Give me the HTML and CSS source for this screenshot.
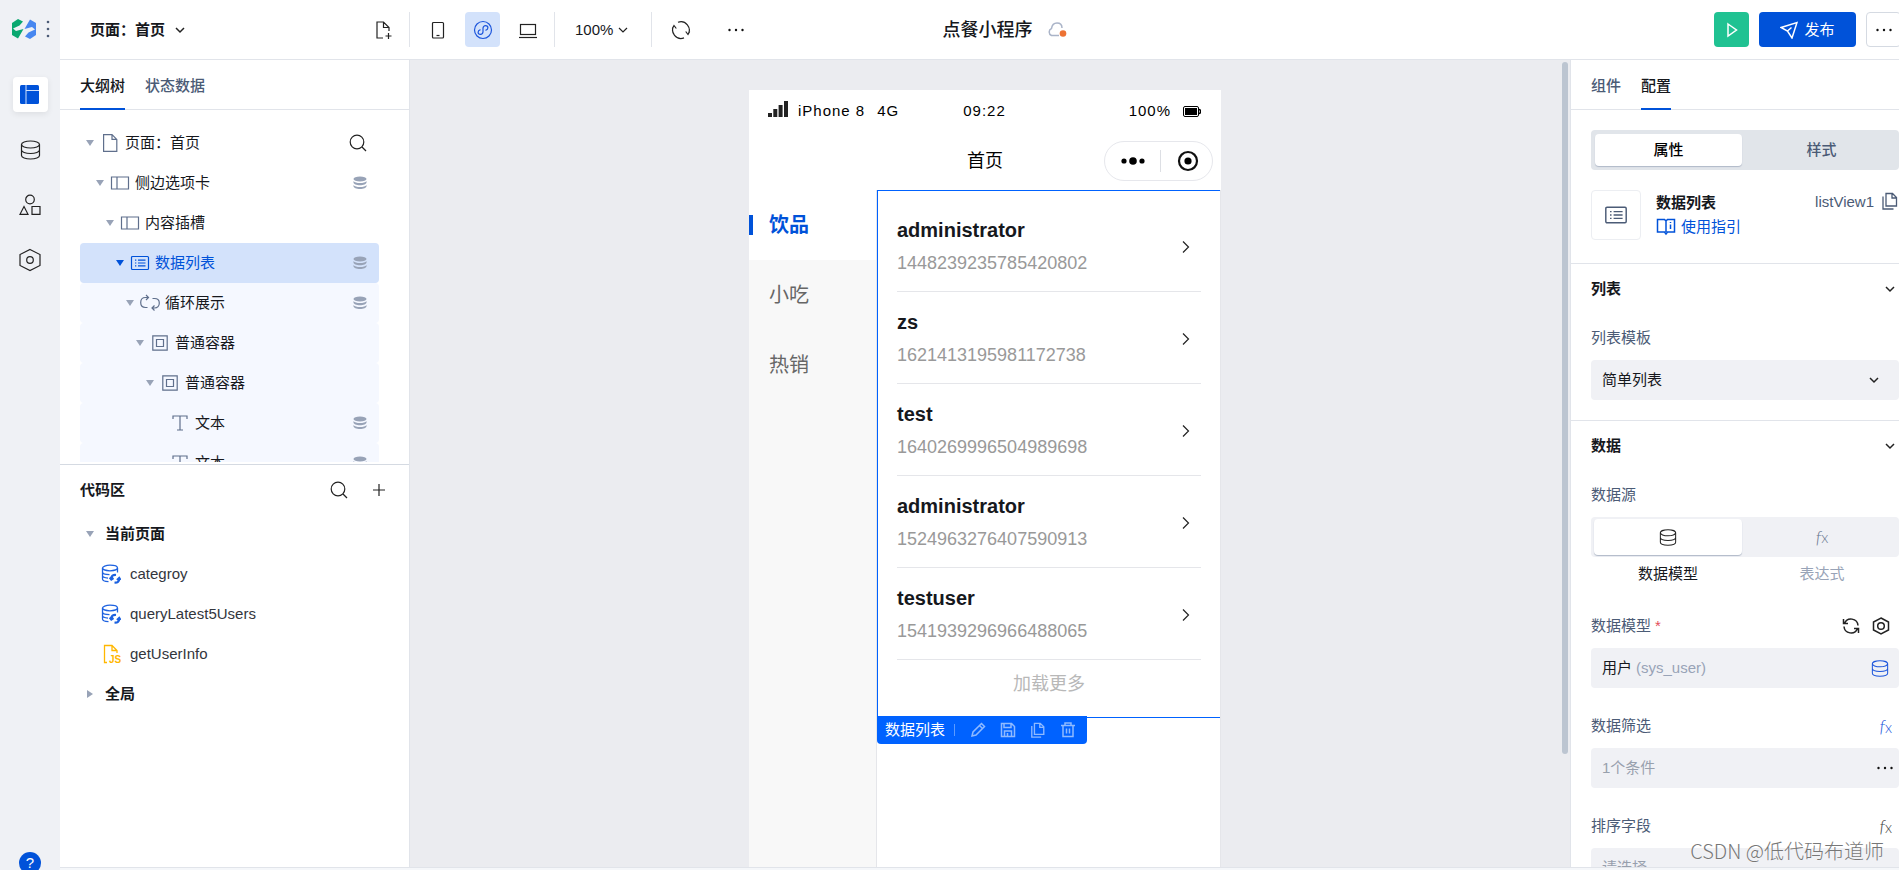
FILE: index.html
```html
<!DOCTYPE html>
<html lang="zh-CN">
<head>
<meta charset="utf-8">
<title>点餐小程序</title>
<link rel="stylesheet" href="styles.css">
</head>
<body>
<svg class="sprite" aria-hidden="true">
  <symbol id="i-chev" viewBox="0 0 12 12"><path d="M2 4l4 4 4-4"/></symbol>
  <symbol id="i-right" viewBox="0 0 16 16"><path d="M5 2.500l5.500 5.500-5.500 5.500"/></symbol>
  <symbol id="i-tri" viewBox="0 0 8 6"><path d="M0 0h8l-4 6z"/></symbol>
  <symbol id="i-db" viewBox="0 0 20 20"><ellipse cx="10" cy="4.500" rx="9" ry="3.500"/><path d="M1 4.500v11c0 2 4 3.500 9 3.500s9-1.500 9-3.500v-11M1 10c0 2 4 3.500 9 3.500s9-1.500 9-3.500"/></symbol>
  <symbol id="i-dbs" viewBox="0 0 14 14"><ellipse cx="7" cy="3" rx="6.500" ry="2.500"/><path d="M.5 5c1 1.500 3.500 2 6.500 2s5.500-.5 6.500-2v1.500c0 1.500-3 2.700-6.500 2.700S.5 8 .5 6.500zM.5 9c1 1.500 3.500 2 6.500 2s5.500-.5 6.500-2v1.300c0 1.500-3 2.700-6.500 2.700S.5 11.800.5 10.300z"/></symbol>
  <symbol id="i-file" viewBox="0 0 20 18"><path d="M3.600 .6h8.400l4.800 4.800v12H3.600zM12 .6v4.800h4.800"/></symbol>
  <symbol id="i-newfile" viewBox="0 0 18 20"><path d="M8 18H2V2h6.500l5.500 5.500V11M8.500 2v5.500H14M10.500 16h6M13.500 13v6"/></symbol>
  <symbol id="i-copy" viewBox="0 0 18 18"><path d="M5 1.500h6.500l4 4V14H5zM11 1.500V6h4.500M2 4.500V17h10.500"/></symbol>
  <symbol id="i-side" viewBox="0 0 20 16"><path d="M1.500 2h17v12h-17zM7 2v12"/></symbol>
  <symbol id="i-list" viewBox="0 0 20 16"><rect x="1.500" y="1.500" width="17" height="13" rx="1"/><path d="M8 5.200h7.500M8 8h7.500M8 10.800h7.500M5 5.200h1.300M5 8h1.300M5 10.800h1.300"/></symbol>
  <symbol id="i-loop" viewBox="0 0 20 16"><path d="M8 2.500H5.500C2.500 2.500 .7 4.500 .7 7.500s1.800 5 4.800 5h2M6 0l2.500 2.500L6 5M12.500 3.500h2c3 0 4.800 1.800 4.800 4.500s-1.800 5-4.800 5H12M14.500 10.500l-2.500 2.500 2.500 2.500"/></symbol>
  <symbol id="i-box" viewBox="0 0 16 16"><path d="M.8 .8h14.400v14.400H.8zM4.500 4.500h7v7h-7z"/></symbol>
  <symbol id="i-text" viewBox="0 0 16 16"><path d="M1 4V1h14v3M8 1v14M5 15h6"/></symbol>
  <symbol id="i-search" viewBox="0 0 18 18"><circle cx="8" cy="8" r="6.800"/><path d="M13 13l4 4"/></symbol>
  <symbol id="i-plus" viewBox="0 0 14 14"><path d="M1 7h12M7 1v12"/></symbol>
  <symbol id="i-dots" viewBox="0 0 18 18"><circle cx="2.500" cy="9" r="1.200"/><circle cx="9" cy="9" r="1.200"/><circle cx="15.500" cy="9" r="1.200"/></symbol>
  <symbol id="i-query" viewBox="0 0 20 20"><ellipse cx="9" cy="4" rx="7.500" ry="2.800"/><path d="M1.500 4v11c0 1.300 2.500 2.500 6 2.700M16.500 4v4.500M1.500 8c0 1.300 2.500 2.600 7 2.700M1.500 11.500c0 1.300 2 2.300 5.500 2.600"/><path d="M15 11c-3-.3-4.700 1-4.700 3.500M8.700 13.500l1.600 2 2.200-1.500M13.500 18.500c3 .3 4.700-1 4.700-3.500M16 16l2.200-2 1.300 2" stroke-width="2.200"/></symbol>
</svg>

<div class="app">
  <nav class="rail" aria-label="主导航">
    <div class="brand">
      <svg class="logo" viewBox="0 0 24 20"><path fill="#0aa870" d="M0 4L6 0l5 2.500-3.500 4L1 9.500l3 2.500 7.500-2L6 19.500 0 16z"/><path fill="#4787f0" d="M24 16l-6 4-5-2.500 3.500-4 6.500-3L20 8l-7.500 2L18 .5 24 4z"/></svg>
      <svg class="vdots" viewBox="0 0 4 18"><circle cx="2" cy="2" r="1.300"/><circle cx="2" cy="9" r="1.300"/><circle cx="2" cy="16" r="1.300"/></svg>
    </div>
    <button class="rail-btn active" aria-label="页面"><svg width="20" height="20" viewBox="0 0 20 20"><rect width="19" height="19" rx="1.500" fill="#0052d9"/><path d="M6 0v19M6 5.500h13" stroke="#d3e2fb" fill="none"/></svg></button>
    <button class="rail-btn" aria-label="数据"><svg class="ic" width="21" height="20"><use href="#i-db"/></svg></button>
    <button class="rail-btn" aria-label="组件"><svg class="ic" width="22" height="22" viewBox="0 0 22 22"><circle cx="11" cy="5.500" r="4.300"/><path d="M5 12.500l4 7.800H1zM13 12.500h8v7.800h-8z"/></svg></button>
    <button class="rail-btn" aria-label="设置"><svg class="ic" width="22" height="24" viewBox="0 0 22 24"><path d="M11 1.500l10 5v11l-10 5-10-5v-11z"/><circle cx="11" cy="12" r="3.300"/></svg></button>
    <button class="help" aria-label="帮助">?</button>
  </nav>

  <header class="topbar">
    <div class="tools">
      <div class="page-part">
        <button class="page-pick">页面：首页<svg class="ic mid" width="12" height="12"><use href="#i-chev"/></svg></button>
        <button class="tool" aria-label="新建页面"><svg class="ic" width="18" height="20"><use href="#i-newfile"/></svg></button>
      </div>
      <div class="group devices">
        <button class="tool" aria-label="手机"><svg class="ic" width="14" height="20" viewBox="0 0 14 20"><rect x="1.500" y="2.500" width="11" height="15.500" rx="1"/><path d="M5.500 15.500h3"/></svg></button>
        <button class="tool on" aria-label="小程序"><svg class="ic" width="20" height="20" viewBox="0 0 20 20"><circle cx="10" cy="10" r="8.500"/><path d="M7.500 9.700c-1.500.4-2.400 1.300-2.400 2.500 0 1.200 1 2.100 2.300 2.100 1.500 0 2.600-1 2.600-2.500V8.200c0-1.500 1.100-2.500 2.600-2.500 1.300 0 2.300.9 2.300 2.100 0 1.200-.9 2.100-2.400 2.500"/></svg></button>
        <button class="tool" aria-label="电脑"><svg class="ic" width="20" height="18" viewBox="0 0 20 18"><rect x="2.500" y="3.500" width="15" height="10"/><path d="M1 16.500h18"/></svg></button>
      </div>
      <div class="group"><button class="zoom">100%<svg class="ic" width="12" height="12"><use href="#i-chev"/></svg></button></div>
      <div class="group last">
        <button class="tool" aria-label="刷新"><svg class="ic" width="20" height="20" viewBox="0 0 20 20"><path d="M7 2.200A8.400 8.400 0 0 1 17 14.500M14.700 11.500l2.300 3 1.700-3M13 17.900A8.400 8.400 0 0 1 3 5.500M5.300 8.500L3 5.500l-1.700 3"/></svg></button>
        <button class="tool" aria-label="更多"><svg class="fl" width="18" height="18"><use href="#i-dots"/></svg></button>
      </div>
    </div>
    <h1 class="app-name">点餐小程序<svg width="20" height="16" viewBox="0 0 20 16"><path d="M12 13.500H4.500a3.800 3.800 0 0 1 0-7C5 3 7 1 10 1s5 2 5 5" fill="none" stroke="#aab4c8" stroke-width="1.500"/><circle cx="16" cy="11.500" r="3.300" fill="#ed7233"/></svg></h1>
    <div class="actions">
      <button class="run" aria-label="预览"><svg width="12" height="16" viewBox="0 0 12 16"><path d="M2 2l8.500 6L2 14z" fill="none" stroke="#fff" stroke-width="1.500"/></svg></button>
      <button class="publish"><svg width="18" height="18" viewBox="0 0 18 18"><path d="M1 6.500L17 1.500 12 17 7.500 10zM7.500 10l4-3.500" fill="none" stroke="#fff" stroke-width="1.500"/></svg>发布</button>
      <button class="more" aria-label="更多操作"><svg class="fl" width="18" height="18"><use href="#i-dots"/></svg></button>
    </div>
  </header>

  <aside class="outline">
    <div class="tabs"><button class="tab on">大纲树</button><button class="tab">状态数据</button></div>
    <div class="tree-wrap">
      <ul class="tree">
        <li class="row l0"><svg class="tri"><use href="#i-tri"/></svg><svg class="node"><use href="#i-file"/></svg>页面：首页<button class="end plain" aria-label="搜索"><svg class="ic" width="18" height="18"><use href="#i-search"/></svg></button></li>
        <li class="row l1"><svg class="tri"><use href="#i-tri"/></svg><svg class="node"><use href="#i-side"/></svg>侧边选项卡<svg class="end dbs"><use href="#i-dbs"/></svg></li>
        <li class="row l2"><svg class="tri"><use href="#i-tri"/></svg><svg class="node"><use href="#i-side"/></svg>内容插槽</li>
        <li class="row l3 sel"><svg class="tri"><use href="#i-tri"/></svg><svg class="node"><use href="#i-list"/></svg>数据列表<svg class="end dbs"><use href="#i-dbs"/></svg></li>
        <li class="row l4 sub"><svg class="tri"><use href="#i-tri"/></svg><svg class="node"><use href="#i-loop"/></svg>循环展示<svg class="end dbs"><use href="#i-dbs"/></svg></li>
        <li class="row l5 sub"><svg class="tri"><use href="#i-tri"/></svg><svg class="node small"><use href="#i-box"/></svg>普通容器</li>
        <li class="row l6 sub"><svg class="tri"><use href="#i-tri"/></svg><svg class="node small"><use href="#i-box"/></svg>普通容器</li>
        <li class="row l7 sub"><svg class="tri"></svg><svg class="node small"><use href="#i-text"/></svg>文本<svg class="end dbs"><use href="#i-dbs"/></svg></li>
        <li class="row l7 sub"><svg class="tri"></svg><svg class="node small"><use href="#i-text"/></svg>文本<svg class="end dbs"><use href="#i-dbs"/></svg></li>
      </ul>
    </div>
    <section class="code">
      <div class="code-head"><h2>代码区</h2><button class="plain" aria-label="搜索"><svg class="ic" width="18" height="18"><use href="#i-search"/></svg></button><button class="plain" aria-label="添加"><svg class="ic" width="14" height="14"><use href="#i-plus"/></svg></button></div>
      <ul class="code-list">
        <li class="fold"><svg class="tri"><use href="#i-tri"/></svg>当前页面</li>
        <li class="entry"><svg class="query"><use href="#i-query"/></svg>categroy</li>
        <li class="entry"><svg class="query"><use href="#i-query"/></svg>queryLatest5Users</li>
        <li class="entry"><svg class="js" viewBox="0 0 20 20"><path d="M6 18.500H3.500v-17h7.500l5 5V9M11 1.500v5h5"/><text x="8" y="18.500">JS</text></svg>getUserInfo</li>
        <li class="fold shut"><svg class="tri"><use href="#i-tri"/></svg>全局</li>
      </ul>
    </section>
  </aside>

  <main class="canvas">
    <div class="stage">
      <div class="phone">
        <div class="status">
          <span class="carrier"><svg width="20" height="16" viewBox="0 0 20 16"><path d="M0 12h4v4H0zM5.300 8h4v8h-4zM10.600 4h4v12h-4zM16 0h4v16h-4z" fill="#222"/></svg><span>iPhone 8</span><span>4G</span></span>
          <span class="clock">09:22</span>
          <span class="power">100%<svg width="18" height="11" viewBox="0 0 18 11"><rect x=".5" y=".5" width="15" height="10" rx="1.500" fill="none" stroke="#000"/><path d="M2 2h12v7H2z"/><path d="M16 3.500c2 0 2 4 0 4" fill="none" stroke="#000" stroke-width="1.500"/></svg></span>
        </div>
        <div class="navbar">
          <span class="nav-title">首页</span>
          <div class="capsule">
            <button class="plain" aria-label="菜单"><svg width="24" height="10" viewBox="0 0 24 10"><circle cx="3" cy="5" r="2.600"/><circle cx="12" cy="5" r="3.800"/><circle cx="21" cy="5" r="2.600"/></svg></button>
            <button class="plain" aria-label="关闭"><svg width="22" height="22" viewBox="0 0 22 22"><circle cx="11" cy="11" r="9" fill="none" stroke="#111" stroke-width="2.200"/><circle cx="11" cy="11" r="3.600"/></svg></button>
          </div>
        </div>
        <div class="phone-body">
          <div class="side-tabs"><button class="on">饮品</button><button>小吃</button><button>热销</button></div>
          <div class="pane">
            <div class="listview">
              <ul>
                <li><div><b>administrator</b><span>1448239235785420802</span></div><svg class="ic" width="16" height="16"><use href="#i-right"/></svg></li>
                <li><div><b>zs</b><span>1621413195981172738</span></div><svg class="ic" width="16" height="16"><use href="#i-right"/></svg></li>
                <li><div><b>test</b><span>1640269996504989698</span></div><svg class="ic" width="16" height="16"><use href="#i-right"/></svg></li>
                <li><div><b>administrator</b><span>1524963276407590913</span></div><svg class="ic" width="16" height="16"><use href="#i-right"/></svg></li>
                <li><div><b>testuser</b><span>1541939296966488065</span></div><svg class="ic" width="16" height="16"><use href="#i-right"/></svg></li>
              </ul>
              <button class="load">加载更多</button>
              <div class="toolbar">
                <span>数据列表</span><i></i>
                <button aria-label="编辑"><svg viewBox="0 0 16 16"><path d="M2 14l1-4 8.500-8.500 3 3L6 13zM9.500 3.500l3 3"/></svg></button>
                <button aria-label="保存"><svg viewBox="0 0 16 16"><path d="M1.500 1.500h10l3 3v10h-13zM4 1.500v4h7v-4M4.500 14.500V9h7v5.500M7.500 11v3.500"/></svg></button>
                <button aria-label="复制"><svg viewBox="0 0 18 18"><use href="#i-copy"/></svg></button>
                <button aria-label="删除"><svg viewBox="0 0 16 16"><path d="M1 3.500h14M5 3.500V1h6v2.500M3 3.500v11h10v-11M6.500 6.500v5M9.500 6.500v5"/></svg></button>
              </div>
            </div>
          </div>
        </div>
      </div>
    </div>
    <div class="scroll"><div class="thumb"></div></div>
  </main>

  <aside class="props">
    <div class="tabs"><button class="tab">组件</button><button class="tab on">配置</button></div>
    <div class="seg main-seg"><button class="on">属性</button><button>样式</button></div>
    <div class="widget">
      <div class="thumbnail"><svg width="24" height="20"><use href="#i-list"/></svg></div>
      <div class="about"><b>数据列表</b><a href="#guide"><svg width="20" height="18" viewBox="0 0 20 18"><path d="M10 3L8.500 1.500H1.500v12.500h7L10 16l1.500-2h7V1.500h-7zM10 3v11M14.500 6.500V11M14.500 4v1"/></svg>使用指引</a></div>
      <div class="ident">listView1<button class="plain" aria-label="复制"><svg width="18" height="18"><use href="#i-copy"/></svg></button></div>
    </div>
    <section class="sect">
      <h3>列表<svg class="ic mid" width="12" height="12"><use href="#i-chev"/></svg></h3>
      <div class="sect-body">
        <label class="lab" for="tpl">列表模板</label>
        <div class="select-box"><select id="tpl"><option>简单列表</option></select><svg class="ic mid" width="12" height="12"><use href="#i-chev"/></svg></div>
      </div>
    </section>
    <section class="sect">
      <h3>数据<svg class="ic mid" width="12" height="12"><use href="#i-chev"/></svg></h3>
      <div class="sect-body">
        <div class="lab">数据源</div>
        <div class="seg source-seg"><button class="on" aria-label="数据模型"><svg class="ic" width="18" height="17"><use href="#i-db"/></svg></button><button class="fx grey" aria-label="表达式"><i>f</i><span>x</span></button></div>
        <div class="seg-names"><span>数据模型</span><span>表达式</span></div>
        <div class="lab">数据模型<em>*</em><span class="lab-tools wide"><button class="plain" aria-label="刷新"><svg class="ic mid" width="18" height="18" viewBox="0 0 18 18"><path d="M2.500 6.500a7 7 0 0 1 13.500 2M15.500 11.500a7 7 0 0 1-13.500-2M1.500 2v4.500H6M16.500 16v-4.500H12"/></svg></button><button class="plain" aria-label="设置"><svg class="hexbold" width="18" height="18" viewBox="0 0 18 18"><path d="M9 1l7.500 4v8L9 17l-7.500-4V5z"/><circle cx="9" cy="9" r="3.300"/></svg></button></span></div>
        <button class="field model">用户 <small>(sys_user)</small><svg class="ic blue" width="18" height="17"><use href="#i-db"/></svg></button>
        <div class="lab">数据筛选<span class="lab-tools"><button class="fx blue" aria-label="表达式"><i>f</i><span>x</span></button></span></div>
        <button class="field hint">1个条件<svg class="fl" width="18" height="18"><use href="#i-dots"/></svg></button>
        <div class="lab">排序字段<span class="lab-tools"><button class="fx" aria-label="表达式"><i>f</i><span>x</span></button></span></div>
        <button class="field hint">请选择</button>
      </div>
    </section>
  </aside>
  <div class="credit">CSDN @低代码布道师</div>
</div>
</body>
</html>
```
FILE: styles.css
```css
* { box-sizing: border-box; }
body {
  margin: 0;
  font: 15px/20px "Liberation Sans", "Noto Sans CJK SC", sans-serif;
  color: #16181d;
}
button, select { font: inherit; color: inherit; background: none; border: 0; padding: 0; margin: 0; cursor: pointer; }
h1, h2, h3, ul { margin: 0; padding: 0; list-style: none; font-size: 15px; }
svg { display: block; flex: none; }
.sprite { display: none; }
.ic { fill: none; stroke: #222; stroke-width: 1.2; }
.ic.mid { stroke-width: 1.5; }
.ic.blue { stroke: #1d56dc; }
.hexbold { fill: none; stroke: #222; stroke-width: 1.5; }
.fl { fill: #111; }
.plain { display: flex; align-items: center; justify-content: center; }

.app {
  position: relative;
  display: grid;
  grid-template-columns: 60px 350px minmax(0, 1fr) 329px;
  grid-template-rows: 60px minmax(0, 1fr) 2px;
  height: 100vh;
  overflow: hidden;
  background: #f5f7fa;
}

/* Icon rail */
.rail {
  grid-row: 1 / -1;
  display: flex;
  flex-direction: column;
  align-items: center;
  gap: 20px;
  background: #eff1f5;
  overflow: hidden;
}
.brand { display: flex; align-items: center; gap: 10px; height: 57px; padding-left: 2px; }
.logo { width: 24px; height: 20px; }
.vdots { width: 4px; height: 18px; fill: #4b5b76; }
.rail-btn { flex: none; display: flex; align-items: center; justify-content: center; width: 35px; height: 35px; border-radius: 4px; }
.rail-btn.active { background: #fff; box-shadow: 0 2px 6px #00000014; }
.help { flex: none; width: 22px; height: 22px; margin: auto 0 -4px; border-radius: 50%; background: #0052d9; color: #fff; }

/* Top bar */
.topbar {
  grid-column: 2 / -1;
  display: grid;
  grid-template-columns: 1fr auto 1fr;
  align-items: center;
  margin-right: -50px;
  background: #fff;
  border-bottom: 1px solid #e1e4ea;
}
.tools { display: flex; align-items: center; }
.tool { display: flex; align-items: center; justify-content: center; width: 35px; height: 35px; border-radius: 4px; }
.tool.on { background: #d3e2fb; }
.tool.on .ic { stroke: #1d56dc; }
.page-part { display: flex; justify-content: space-between; width: 350px; padding: 0 8px 0 30px; border-right: 1px solid #e1e4ea; }
.page-pick { display: flex; align-items: center; gap: 9px; font-weight: 700; }
.group { display: flex; align-items: center; height: 35px; border-right: 1px solid #e1e4ea; }
.devices { gap: 10px; padding: 0 9px 0 10px; }
.zoom { display: flex; align-items: center; gap: 4px; padding: 0 22px 0 20px; }
.last { gap: 20px; padding-left: 11px; border: 0; }
.app-name { display: flex; align-items: center; gap: 14px; font-size: 18px; font-weight: 500; }
.actions { display: flex; justify-content: flex-end; gap: 10px; padding-right: 48px; }
.actions button { display: flex; align-items: center; justify-content: center; height: 35px; border-radius: 4px; }
.run { width: 35px; background: #20c292; }
.actions .publish { width: 97px; gap: 6px; background: #0052d9; color: #fff; }
.actions .more { width: 35px; border: 1px solid #d5dae2; }

/* Tabs shared by the side panels */
.tabs { flex: none; display: flex; gap: 20px; height: 50px; padding: 0 20px; border-bottom: 1px solid #e1e4ea; }
.tab { height: 50px; padding-top: 2px; color: #4b5b76; font-weight: 500; }
.tab.on { color: #16181d; box-shadow: inset 0 -2px #0052d9; }

/* Outline panel */
.outline { display: grid; grid-template-rows: 50px minmax(0, 355fr) minmax(0, 402fr); min-height: 0; background: #fff; border-right: 1px solid #e1e4ea; border-bottom: 1px solid #e1e4ea; }
.tree-wrap { display: flex; padding: 13px 30px 2px 20px; border-bottom: 1px solid #d5dae2; }
.tree { flex: 1; overflow: hidden; }
.row { display: flex; align-items: center; height: 40px; padding-right: 12px; border-radius: 4px; }
.tri { width: 8px; height: 6px; fill: #98a3b7; }
.node { width: 20px; height: 18px; margin: 0 5px 0 6px; fill: none; stroke: #5f6f8c; stroke-width: 1.2; }
.node.small { width: 16px; height: 16px; margin: 0 7px 0 8px; }
.end { margin-left: auto; }
.dbs { width: 14px; height: 14px; fill: #98a3b7; }
.sub { background: #f5f8ff; }
.sel { background: #d3e2fb; color: #0052d9; }
.sel .tri { fill: #0052d9; }
.sel .node { stroke: #0052d9; }
.l0 { padding-left: 6px; }
.l1 { padding-left: 16px; }
.l2 { padding-left: 26px; }
.l3 { padding-left: 36px; }
.l4 { padding-left: 46px; }
.l5 { padding-left: 56px; }
.l6 { padding-left: 66px; }
.l7 { padding-left: 76px; }

.code { overflow: hidden; }
.code-head { display: flex; align-items: center; gap: 24px; height: 49px; padding: 0 23px 0 20px; }
.code-head h2 { margin-right: auto; }
.code-list li { display: flex; align-items: center; height: 40px; }
.code-list .fold { gap: 11px; padding-left: 26px; font-weight: 700; }
.shut .tri { transform: rotate(-90deg); }
.code-list .entry { gap: 9px; padding-left: 41px; color: #33363d; }
.query, .js { width: 20px; height: 20px; fill: none; stroke: #1d62e0; stroke-width: 1.3; }
.js { stroke: #ffb700; }
.js text { fill: #ffb700; stroke: none; font-size: 10px; font-weight: 700; }

/* Canvas */
.canvas { display: flex; min-height: 0; overflow: hidden; background: #ebecf0; border-bottom: 1px solid #e1e4ea; }
.stage { flex: 1; display: flex; justify-content: center; padding-top: 30px; }
.phone { display: flex; flex-direction: column; width: 472px; background: #fff; }
.status { display: grid; grid-template-columns: 1fr auto 1fr; align-items: center; height: 42px; padding: 0 20px 0 19px; letter-spacing: 1px; color: #000; }
.carrier { display: flex; gap: 10px; }
.carrier span + span { padding-left: 2px; }
.power { display: flex; align-items: center; justify-content: flex-end; gap: 12px; }
.navbar { display: grid; grid-template-columns: 1fr auto 1fr; align-items: center; height: 58px; padding-right: 8px; font-size: 18px; color: #000; }
.nav-title { grid-column: 2; padding-left: 8px; }
.capsule { justify-self: end; display: grid; grid-template-columns: 55px 1fr; width: 109px; height: 40px; border: 1px solid #e6e7ec; border-radius: 20px; }
.capsule button + button { margin: 8px 0; padding-left: 2px; border-left: 1px solid #dddfe4; }
.phone-body { flex: 1; display: flex; }
.side-tabs { width: 128px; border-right: 1px solid #e5e6ea; background: #f8f8f8; }
.side-tabs button { display: flex; align-items: center; width: 100%; height: 70px; font-size: 20px; color: #666; padding-left: 20px; }
.side-tabs .on { padding: 0; gap: 16px; background: #fff; color: #0052d9; font-weight: 700; }
.side-tabs .on::before { content: ""; width: 4px; height: 20px; background: #0052d9; }
.pane { flex: 1; border-right: 1px solid #e5e6ea; }
.listview { position: relative; border: 1px solid #0062ff; border-right: 0; padding: 9px 19px 33px; }
.listview li { display: flex; align-items: center; justify-content: space-between; height: 92px; padding: 2px 7px 0 0; border-bottom: 1px solid #e5e6ea; }
.listview li div { display: grid; gap: 9px; line-height: 24px; }
.listview b { font-size: 20px; }
.listview li span { font-size: 18px; color: #999; }
.load { display: block; margin: 13px auto -11px; font-size: 18px; line-height: 22px; color: #b8b8b8; }
.toolbar { position: absolute; top: calc(100% - 1px); left: -1px; display: flex; align-items: center; height: 28px; padding: 0 11px 0 8px; background: #0062ff; color: #fff; border-radius: 0 0 4px 4px; white-space: nowrap; }
.toolbar i { width: 1px; height: 12px; margin: 0 15px 0 9px; background: #5c9bff; }
.toolbar button + button { margin-left: 14px; }
.toolbar svg { width: 16px; height: 16px; fill: none; stroke: #8fbaff; stroke-width: 1.5; }
.scroll { flex: none; width: 10px; padding: 2px 2px 0; }
.thumb { width: 6px; height: 86%; border-radius: 3px; background: #bcc5d1; }

/* Properties panel */
.props { display: flex; flex-direction: column; min-height: 0; overflow: hidden; background: #fff; border-left: 1px solid #e1e4ea; border-bottom: 1px solid #e1e4ea; }
.seg { flex: none; display: grid; grid-template-columns: 1fr 1fr; gap: 6px; height: 40px; padding: 4px; border-radius: 4px; }
.seg button { display: flex; align-items: center; justify-content: center; border-radius: 4px; color: #4b5b76; font-weight: 500; }
.seg .on { background: #fff; color: #000; box-shadow: 0 1px 1px #b0b9c8; }
.main-seg { margin: 20px 0 20px 20px; background: #e1e5ea; }
.widget { flex: none; display: flex; gap: 15px; height: 73px; padding-left: 20px; }
.thumbnail { display: flex; align-items: center; justify-content: center; width: 50px; height: 50px; border: 1px solid #eceef2; border-radius: 4px; }
.thumbnail svg { fill: none; stroke: #4b5b76; stroke-width: 1.2; }
.about { display: grid; align-content: start; gap: 4px; padding-top: 3px; }
.about a { display: flex; align-items: center; gap: 5px; color: #0052d9; text-decoration: none; }
.about svg { fill: none; stroke: #0052d9; stroke-width: 1.5; }
.ident { display: flex; align-items: start; gap: 7px; margin-left: auto; padding-top: 2px; color: #4b5b76; }
.ident svg { fill: none; stroke: #4b5b76; stroke-width: 1.3; }
.sect { flex: none; border-top: 1px solid #e1e4ea; }
.sect h3 { display: flex; align-items: center; justify-content: space-between; height: 50px; padding: 0 3px 0 20px; }
.sect-body { padding: 12px 0 20px 20px; }
.lab { display: flex; align-items: center; height: 24px; margin-bottom: 10px; color: #4b5b76; }
.lab em { margin-left: 4px; color: #e34d59; font-style: normal; }
.lab-tools { display: flex; gap: 12px; margin-left: auto; padding-right: 7px; }
.lab-tools.wide { padding-right: 9px; }
.select-box { position: relative; }
.select-box select { appearance: none; display: block; width: 100%; height: 40px; padding-left: 11px; border-radius: 4px; background: #f0f1f5; }
.select-box svg { position: absolute; right: 19px; top: 14px; pointer-events: none; }
.source-seg { padding: 2px 3px; background: #f0f1f5; }
.seg-names { display: grid; grid-template-columns: 1fr 1fr; margin: 7px 0 30px; text-align: center; color: #98a3b7; }
.seg-names span:first-child { color: #16181d; }
.fx { display: flex; align-items: baseline; color: #444; font-family: Lato, sans-serif; font-weight: 300; }
.fx i { font-size: 18px; }
.fx span { font-size: 15px; }
.seg .fx.grey { align-items: center; color: #6b7890; font-weight: 300; }
.fx.blue { color: #1d56dc; }
.field { display: flex; align-items: center; width: 100%; height: 40px; margin-bottom: 26px; padding: 0 5px 0 11px; border-radius: 4px; background: #f0f1f5; }
.field svg { margin-left: auto; }
.model { padding-right: 10px; }
.field small { margin-left: 4px; font-size: 15px; color: #98a3b7; }
.hint { color: #98a0ad; }

.credit { position: absolute; right: 15px; bottom: 7px; font-family: "Noto Sans CJK SC", sans-serif; font-size: 20px; font-weight: 300; line-height: 24px; color: #777; text-shadow: 0 0 1px #fff; pointer-events: none; }
```
